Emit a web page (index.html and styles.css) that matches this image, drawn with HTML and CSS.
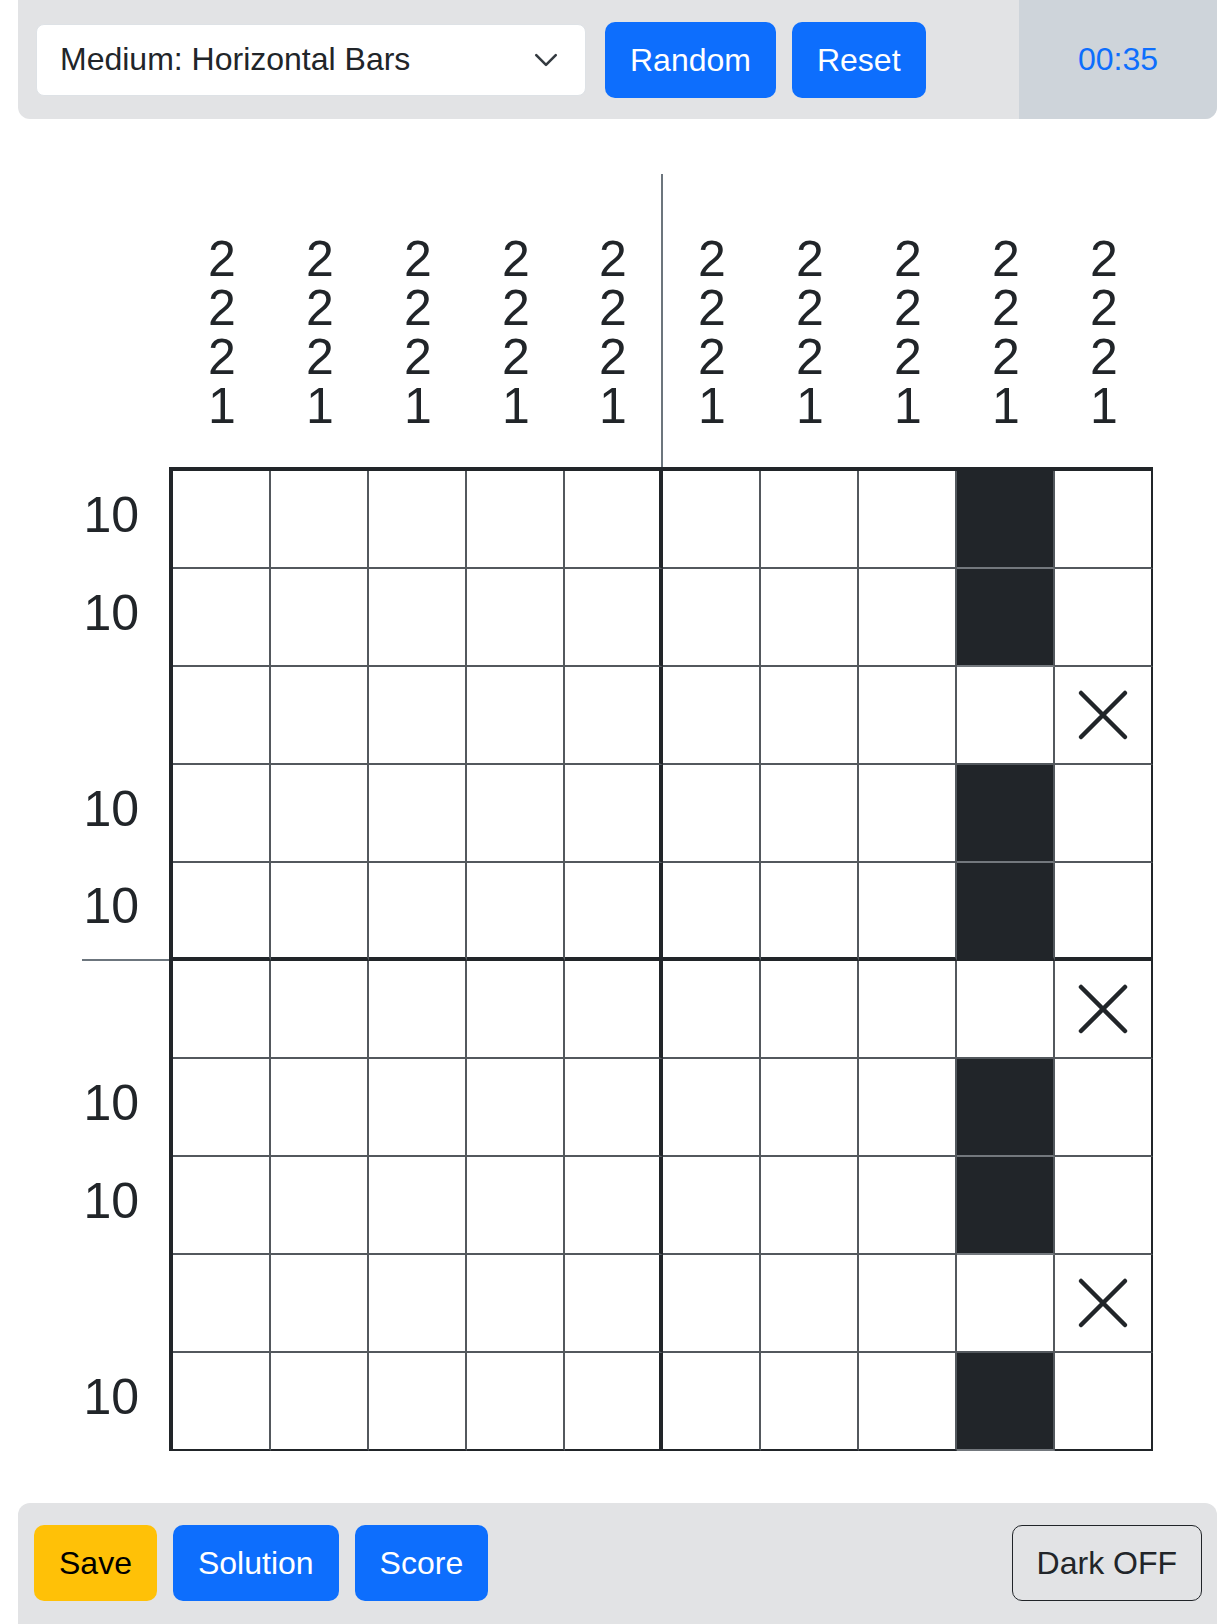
FILE: index.html
```html
<!DOCTYPE html>
<html lang="en">
<head>
    <meta charset="UTF-8">
    <meta name="viewport" content="width=device-width, initial-scale=1.0">
    <title>Nonogram</title>
    <link rel="stylesheet" href="styles.css">
</head>
<body>
    <div class="page">
        <div class="toolbar toolbar-top">
            <div class="controls">
                <div class="select">
                    <span>Medium: Horizontal Bars</span>
                    <svg class="chevron" viewBox="0 0 16 16" width="26" height="26">
                        <path d="M2 5l6 6 6-6" fill="none" stroke="#343a40" stroke-width="1.6" stroke-linecap="round" stroke-linejoin="round"/>
                    </svg>
                </div>
                <button class="btn btn-primary">Random</button>
                <button class="btn btn-primary">Reset</button>
            </div>
            <div class="timer">00:35</div>
        </div>

        <div class="board">
            <div class="board-top">
                <div class="corner"></div>
                <div class="col-clues" id="colClues"></div>
            </div>
            <div class="board-body">
                <div class="row-clues" id="rowClues"></div>
                <div class="grid" id="grid"></div>
            </div>
        </div>

        <div class="toolbar toolbar-bottom">
            <button class="btn btn-warning">Save</button>
            <button class="btn btn-primary">Solution</button>
            <button class="btn btn-primary">Score</button>
            <button class="btn btn-outline">Dark OFF</button>
        </div>
    </div>

    <script>
        // 0 = empty, 1 = filled, 2 = crossed
        const board = [
            [0,0,0,0,0,0,0,0,1,0],
            [0,0,0,0,0,0,0,0,1,0],
            [0,0,0,0,0,0,0,0,0,2],
            [0,0,0,0,0,0,0,0,1,0],
            [0,0,0,0,0,0,0,0,1,0],
            [0,0,0,0,0,0,0,0,0,2],
            [0,0,0,0,0,0,0,0,1,0],
            [0,0,0,0,0,0,0,0,1,0],
            [0,0,0,0,0,0,0,0,0,2],
            [0,0,0,0,0,0,0,0,1,0]
        ];
        const rowClues = ['10', '10', '', '10', '10', '', '10', '10', '', '10'];
        const colClues = [];
        for (let i = 0; i < 10; i++) colClues.push([2, 2, 2, 1]);

        const cross = '<svg viewBox="0 0 52 52" width="52" height="52"><path d="M4 4L48 48M48 4L4 48" stroke="#212529" stroke-width="4.5" stroke-linecap="round"/></svg>';

        const colDiv = document.getElementById('colClues');
        colClues.forEach(nums => {
            colDiv.innerHTML += `<div class="col-clue">${nums.map(n => `<span>${n}</span>`).join('')}</div>`;
        });

        const rowDiv = document.getElementById('rowClues');
        rowClues.forEach(text => {
            rowDiv.innerHTML += `<div class="row-clue">${text}</div>`;
        });

        const grid = document.getElementById('grid');
        board.forEach(row => {
            row.forEach(value => {
                if (value === 1) grid.innerHTML += '<div class="cell filled"></div>';
                else if (value === 2) grid.innerHTML += `<div class="cell">${cross}</div>`;
                else grid.innerHTML += '<div class="cell"></div>';
            });
        });
    </script>
</body>
</html>
```

FILE: styles.css
```css
/* Global */
body {
    margin: 0;
    font-family: "Liberation Sans", Arial, sans-serif;
    color: #212529;
    background-color: #fff;
}

.page {
    padding: 0 15px 0 18px;
}

/* Toolbars */
.toolbar {
    display: flex;
    align-items: center;
    background-color: #e2e3e5;
}

.toolbar-top {
    height: 119px;
    border-radius: 0 0 12px 12px;
    overflow: hidden;
}

.controls {
    flex: 1;
    display: flex;
    align-items: center;
    gap: 16px;
    padding-left: 18px;
}

.select {
    width: 550px;
    height: 72px;
    box-sizing: border-box;
    margin-right: 3px;
    padding: 0 26px 0 23px;
    display: flex;
    align-items: center;
    justify-content: space-between;
    background-color: #fff;
    border: 1px solid #dee2e6;
    border-radius: 8px;
    font-size: 32px;
}

.chevron {
    display: block;
}

.timer {
    width: 198px;
    align-self: stretch;
    display: flex;
    align-items: center;
    justify-content: center;
    background-color: #ced4da;
    color: #0d6efd;
    font-size: 32px;
}

.toolbar-bottom {
    margin-top: 52px;
    padding: 22px 15px 24px 16px;
    gap: 16px;
    border-radius: 12px 12px 0 0;
}

/* Buttons */
.btn {
    font-family: inherit;
    font-size: 32px;
    line-height: 48px;
    padding: 13px 24px;
    border: 1px solid transparent;
    border-radius: 10px;
    cursor: pointer;
}

.btn-primary {
    background-color: #0d6efd;
    color: #fff;
}

.btn-warning {
    background-color: #ffc107;
    color: #000;
}

.btn-outline {
    margin-left: auto;
    background-color: transparent;
    border-color: #212529;
    color: #212529;
}

/* Board */
.board {
    margin-top: 55px;
    display: flex;
    flex-direction: column;
    align-items: center;
}

.board-top,
.board-body {
    display: flex;
}

.corner {
    width: 91px;
}

.col-clues {
    display: flex;
}

.col-clue {
    width: 98px;
    height: 293px;
    box-sizing: border-box;
    padding-bottom: 36px;
    display: flex;
    flex-direction: column;
    justify-content: flex-end;
    align-items: center;
    font-size: 50px;
    line-height: 49px;
}

.col-clue:nth-child(5) {
    border-right: 2px solid #6c757d;
}

.row-clues {
    width: 87px;
    padding-top: 4px;
}

.row-clue {
    height: 98px;
    box-sizing: border-box;
    padding: 0 30px 10px 0;
    display: flex;
    align-items: center;
    justify-content: flex-end;
    font-size: 50px;
}

.row-clue:nth-child(5) {
    border-bottom: 2px solid #6c757d;
}

/* Grid */
.grid {
    display: grid;
    grid-template-columns: repeat(10, 98px);
    border-top: 4px solid #212529;
    border-left: 4px solid #212529;
}

.cell {
    height: 98px;
    box-sizing: border-box;
    display: flex;
    align-items: center;
    justify-content: center;
    background-color: #fff;
    border-right: 2px solid #53585d;
    border-bottom: 2px solid #53585d;
}

.cell:nth-child(10n+5) {
    border-right: 4px solid #212529;
}

.cell:nth-child(10n) {
    border-right-color: #212529;
}

.cell:nth-child(n+41):nth-child(-n+50) {
    border-bottom: 4px solid #212529;
}

.cell:nth-child(n+91) {
    border-bottom-color: #212529;
}

.cell.filled {
    background-color: #212529;
    border-bottom-color: #73787d;
}

.cell svg {
    display: block;
}
```
